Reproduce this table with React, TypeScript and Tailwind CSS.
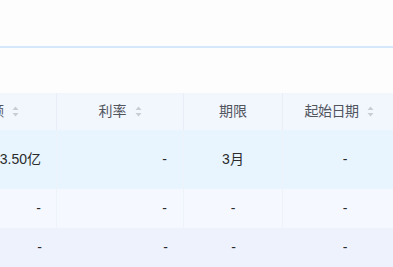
const font = { fontFamily: '"Liberation Sans", "Noto Sans CJK SC", sans-serif' };

interface Row {
  amount: string;
  rate: string;
  term: string;
  start: string;
  bg: string;
  h: string;
  divider: boolean;
}

const rows: Row[] = [
  { amount: '3.50亿', rate: '-', term: '3月', start: '-', bg: 'bg-[#e8f5ff]', h: 'h-[59px]', divider: true },
  { amount: '-', rate: '-', term: '-', start: '-', bg: 'bg-[#f5f9ff]', h: 'h-[39px]', divider: true },
  { amount: '-', rate: '-', term: '-', start: '-', bg: 'bg-[#eef2fc]', h: 'h-[39px]', divider: false },
];

function SortIcon() {
  return (
    <svg width="7" height="11" viewBox="0 0 7 11" className="ml-[8px] shrink-0">
      <path d="M3.5 0.5 L6.5 4 L0.5 4 Z" fill="#c8ccd4" />
      <path d="M3.5 10.5 L6.5 7 L0.5 7 Z" fill="#c8ccd4" />
    </svg>
  );
}

export default function App() {
  const cols = 'grid grid-cols-[118px_127px_99px_124px]';
  return (
    <div className="w-[393px] h-[267px] overflow-hidden bg-[#fdfdfd]" style={font}>
      <div className="h-[46px]" />
      <div className="h-[2px] bg-[#d6e6fb]" />
      <div className="h-[45px]" />
      <div className="overflow-hidden">
        <div className="-ml-[61px] w-[468px]">
          <div className={`${cols} h-[37px] bg-[#f2f6fd] text-[14px] text-[#50555e]`}>
            <div className="flex items-center justify-center border-r border-[#e9eef6]">
              金额<SortIcon />
            </div>
            <div className="flex items-center justify-center border-r border-[#e9eef6]">
              利率<SortIcon />
            </div>
            <div className="flex items-center justify-center border-r border-[#e9eef6]">期限</div>
            <div className="flex items-center justify-center pr-[12px] tracking-[-0.5px]">
              起始日期<SortIcon />
            </div>
          </div>
          {rows.map((r, i) => (
            <div key={i} className={`${cols} ${r.h} ${r.bg} text-[14px] text-[#2b2b2b]`}>
              <div className={`flex items-center justify-end pr-[15px] ${r.divider ? 'border-r border-[#eef2f9]' : ''}`}>
                {r.amount}
              </div>
              <div className={`flex items-center justify-end pr-[16px] ${r.divider ? 'border-r border-[#eef2f9]' : ''}`}>
                {r.rate}
              </div>
              <div className={`flex items-center justify-center ${r.divider ? 'border-r border-[#eef2f9]' : ''}`}>
                {r.term}
              </div>
              <div className="flex items-center justify-center">{r.start}</div>
            </div>
          ))}
        </div>
      </div>
    </div>
  );
}
